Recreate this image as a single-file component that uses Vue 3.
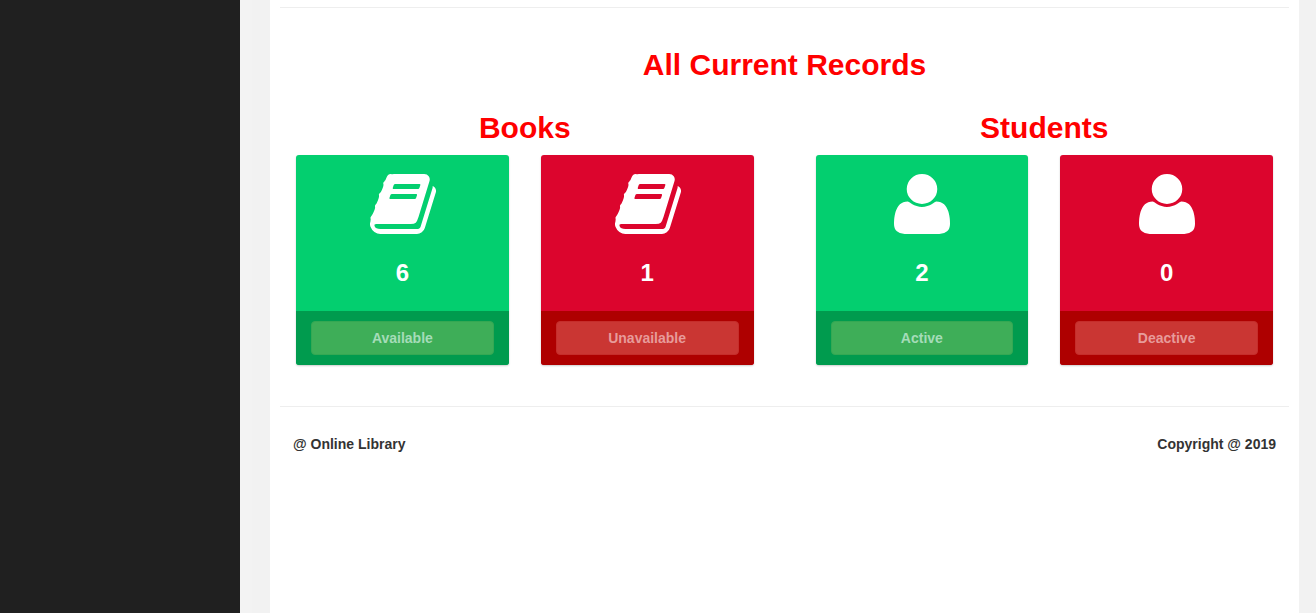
<script setup>
const groups = [
  {
    title: 'Books',
    icon: 'book',
    cards: [
      { count: 6, label: 'Available', tone: 'green' },
      { count: 1, label: 'Unavailable', tone: 'red' },
    ],
  },
  {
    title: 'Students',
    icon: 'user',
    cards: [
      { count: 2, label: 'Active', tone: 'green' },
      { count: 0, label: 'Deactive', tone: 'red' },
    ],
  },
]
</script>

<template>
  <div class="shell">
    <aside class="sidebar"></aside>
    <div class="gutter"></div>
    <main class="page">
      <hr class="rule" />
      <h2 class="title">All Current Records</h2>
      <div class="groups">
        <section v-for="g in groups" :key="g.title" class="group">
          <h2 class="subtitle">{{ g.title }}</h2>
          <div class="cards">
            <article v-for="c in g.cards" :key="c.label" class="card" :class="c.tone">
              <div class="body">
                <svg v-if="g.icon === 'book'" class="icon book" width="66" height="60" viewBox="0 -1408 1664 1536" preserveAspectRatio="none">
                  <path transform="scale(1,-1)" d="M1639 1058q40-57 18-129l-275-906q-19-64-76.5-107.5t-122.5-43.5h-923q-77 0-148.5 53.5t-99.5 131.5q-24 67-2 127q0 4 3 27t4 37q1 8-3 21.5t-3 19.5q2 11 8 21t16.5 23.5t16.5 23.5q23 38 45 91.5t30 91.5q3 10 .5 30t-.5 28q3 11 17 28t17 23q21 36 42 92t25 90q1 9-2.5 32t.5 28q4 13 22 30.5t22 22.5q19 26 42.5 84.5t27.5 96.5q1 8-3 25.5t-2 26.5q2 8 9 18t18 23t17 21q8 12 16.5 30.5t15 35t16 36t19.5 32t26.5 23.5t36 11.5t47.5-5.5l-1-3q38 9 51 9h761q74 0 114-56t18-130l-274-906q-36-119-71.5-153.5t-128.5-34.5h-869q-27 0-38-15q-11-16-1-43q24-70 144-70h923q29 0 56 15.5t35 41.5l300 987q7 22 5 57q38-15 59-43zM575 1056q-4-13 2-22.5t20-9.5h608q13 0 25.5 9.5t16.5 22.5l21 64q4 13-2 22.5t-20 9.5h-608q-13 0-25.5-9.5t-16.5-22.5zM492 800q-4-13 2-22.5t20-9.5h608q13 0 25.5 9.5t16.5 22.5l21 64q4 13-2 22.5t-20 9.5h-608q-13 0-25.5-9.5t-16.5-22.5z" />
                </svg>
                <svg v-else class="icon" width="56" height="60" viewBox="0 -1408 1408 1536" preserveAspectRatio="none">
                  <path transform="scale(1,-1)" d="M1408 131q0-120-73-189.5t-194-69.5h-874q-121 0-194 69.5t-73 189.5q0 53 3.5 103.5t14 109t26.5 108.5t43 97.5t62 81t85.5 53.5t111.5 20q9 0 42-21.5t74.5-48t108-48t133.5-21.5t133.5 21.5t108 48t74.5 48t42 21.5q61 0 111.5-20t85.5-53.5t62-81t43-97.5t26.5-108.5t14-109t3.5-103.5zM1088 1024q0-159-112.5-271.5t-271.5-112.5t-271.5 112.5t-112.5 271.5t112.5 271.5t271.5 112.5t271.5-112.5t112.5-271.5z" />
                </svg>
                <div class="count">{{ c.count }}</div>
              </div>
              <div class="foot">
                <button class="btn" disabled>{{ c.label }}</button>
              </div>
            </article>
          </div>
        </section>
      </div>
      <hr class="rule" />
      <footer class="footer">
        <span>@ Online Library</span>
        <span>Copyright @ 2019</span>
      </footer>
    </main>
  </div>
</template>

<style scoped>
.shell {
  display: flex;
  height: 613px;
  background: #f2f2f2;
  font-family: "Liberation Sans", Arial, sans-serif;
  overflow: hidden;
}
.sidebar { width: 240px; background: #202020; }
.gutter { width: 12px; margin-right: 18px; background: #f3f3f3; }
.page {
  box-sizing: border-box;
  width: 1029px;
  padding: 7px 10px 0;
  background: #fff;
}
.rule { height: 1px; margin: 0; border: 0; background: #eee; }
.title, .subtitle {
  margin: 0;
  color: #f00;
  font-size: 30px;
  line-height: 34px;
  font-weight: bold;
  text-align: center;
}
.title { margin-top: 40px; }
.groups {
  display: flex;
  gap: 62px;
  margin: 29px 16px 41px;
}
.group { flex: 1; }
.subtitle { margin-bottom: 10px; }
.cards { display: flex; gap: 32px; }
.card {
  flex: 1;
  border-radius: 3px;
  overflow: hidden;
  box-shadow: 0 1px 2px rgba(0, 0, 0, 0.2);
}
.green { background: #03cf6f; }
.red { background: #dc052d; }
.body {
  display: flex;
  flex-direction: column;
  align-items: center;
  height: 156px;
  padding-top: 19px;
  box-sizing: border-box;
  color: #fff;
}
.icon { fill: currentColor; }
.book { margin-left: 1px; }
.count {
  margin-top: 25px;
  font-size: 24px;
  line-height: 28px;
  font-weight: bold;
}
.foot { height: 54px; padding: 10px 15px; box-sizing: border-box; }
.green .foot { background: #009b4e; }
.red .foot { background: #ae0000; }
.btn {
  display: block;
  box-sizing: border-box;
  width: 100%;
  height: 34px;
  padding: 0;
  border: 1px solid;
  border-radius: 4px;
  font: bold 14px/20px "Liberation Sans", Arial, sans-serif;
}
.green .btn { background: #3eae58; border-color: #34a853; color: #a5dcb8; }
.red .btn { background: #ca3633; border-color: #c52d2b; color: #e79b9a; }
.footer {
  display: flex;
  justify-content: space-between;
  margin: 27px 13px 0;
  color: #333;
  font-size: 14px;
  line-height: 20px;
  font-weight: bold;
}
</style>
